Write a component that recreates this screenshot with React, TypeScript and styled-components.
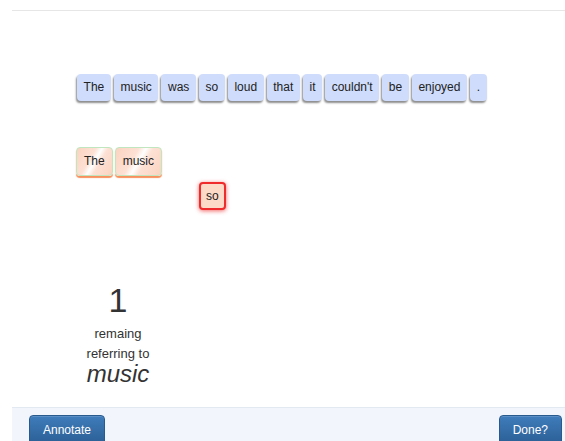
import React from "react";
import styled, { createGlobalStyle } from "styled-components";

const GlobalStyle = createGlobalStyle`
  html, body {
    margin: 0;
    padding: 0;
    background: #fff;
  }
  body {
    font-family: "Liberation Sans", Arial, Helvetica, sans-serif;
    color: #333;
    overflow: hidden;
  }
`;

const words = [
  "The",
  "music",
  "was",
  "so",
  "loud",
  "that",
  "it",
  "couldn't",
  "be",
  "enjoyed",
  ".",
];

const Page = styled.div`
  height: 441px;
  padding: 10px 0 0 12px;
  box-sizing: border-box;
  display: flex;
  flex-direction: column;
`;

const Workspace = styled.div`
  border-top: 1px solid #e6e6e6;
  flex: 1;
  display: flex;
  flex-direction: column;
`;

const Sentence = styled.div`
  display: flex;
  gap: 3px;
  margin: 63px 0 0 65px;
`;

const Token = styled.div`
  height: 27px;
  line-height: 27px;
  padding: 0 6.6px;
  font-size: 12px;
  color: #222;
  background: #cfdcfb;
  border-radius: 4px;
  box-shadow: -1px 2px 2px rgba(0, 0, 0, 0.45);
  cursor: pointer;
  user-select: none;
`;

const Canvas = styled.div`
  position: relative;
  height: 112px;
  margin-top: 46px;
`;

const Chain = styled.div`
  display: flex;
  gap: 2px;
  margin-left: 64px;
`;

const Mention = styled.div`
  height: 27px;
  line-height: 27px;
  padding: 0 7px;
  font-size: 12px;
  color: #222;
  border: 1px solid #bfe6bf;
  border-radius: 4px;
  background: linear-gradient(
    120deg,
    #fbd3c1 0%,
    #fde1d4 38%,
    #ffffff 50%,
    #fde1d4 62%,
    #fbd3c1 100%
  );
  box-shadow: 0 2px 1px #f7905c;
`;

const Floating = styled.div<{ $left: number; $top: number }>`
  position: absolute;
  left: ${(p) => p.$left}px;
  top: ${(p) => p.$top}px;
  height: 24px;
  line-height: 24px;
  padding: 0 5px;
  font-size: 12px;
  color: #222;
  background: #fdd9c8;
  border: 2px solid #f02b2b;
  border-radius: 4px;
  box-shadow: 0 1px 4px rgba(240, 40, 40, 0.7);
`;

const Counter = styled.div`
  width: 212px;
  display: flex;
  flex-direction: column;
  align-items: center;
  margin-top: 22px;
`;

const Remaining = styled.div`
  font-size: 34px;
  line-height: 38px;
  margin-bottom: 5px;
  color: #333;
`;

const Caption = styled.div`
  font-size: 13px;
  line-height: 20px;
  color: #333;
`;

const Target = styled.div`
  font-size: 24px;
  font-style: italic;
  line-height: 22px;
  margin-top: -1px;
`;

const Footer = styled.div`
  margin-top: auto;
  height: 34px;
  flex-shrink: 0;
  background: #f2f6fc;
  border-top: 1px solid #e3e9f1;
  display: flex;
  justify-content: space-between;
  align-items: flex-start;
  padding: 7px 3px 0 17px;
  box-sizing: border-box;
`;

const Button = styled.button`
  height: 30px;
  padding: 0 13px;
  font-family: inherit;
  font-size: 12px;
  color: #fff;
  border: 1px solid #285a8e;
  border-radius: 4px;
  background: linear-gradient(to bottom, #3f7cbb, #2b5f95);
  box-shadow: inset 0 1px 0 rgba(255, 255, 255, 0.15);
  cursor: pointer;
`;

const App: React.FC = () => {
  return (
    <>
      <GlobalStyle />
      <Page>
        <Workspace>
          <Sentence>
            {words.map((w, i) => (
              <Token key={i}>{w}</Token>
            ))}
          </Sentence>
          <Canvas>
            <Chain>
              <Mention>The</Mention>
              <Mention>music</Mention>
            </Chain>
            <Floating $left={187} $top={35}>
              so
            </Floating>
          </Canvas>
          <Counter>
            <Remaining>1</Remaining>
            <Caption>remaing</Caption>
            <Caption>referring to</Caption>
            <Target>music</Target>
          </Counter>
          <Footer>
            <Button>Annotate</Button>
            <Button>Done?</Button>
          </Footer>
        </Workspace>
      </Page>
    </>
  );
};

export default App;
